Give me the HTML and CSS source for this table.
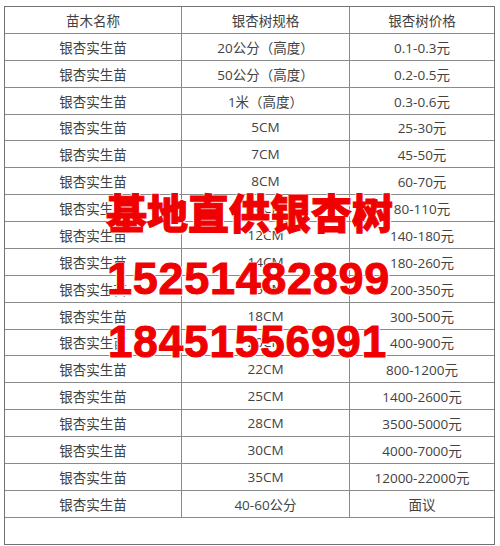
FILE: index.html
```html
<!DOCTYPE html>
<html lang="zh-CN">
<head>
<meta charset="utf-8">
<title>银杏树价格表</title>
<link rel="stylesheet" href="styles.css">
</head>
<body>
<div class="page">
  <div class="table">
    <div class="cell">苗木名称</div><div class="cell">银杏树规格</div><div class="cell">银杏树价格</div>
    <div class="cell">银杏实生苗</div><div class="cell">20公分（高度）</div><div class="cell">0.1-0.3元</div>
    <div class="cell">银杏实生苗</div><div class="cell">50公分（高度）</div><div class="cell">0.2-0.5元</div>
    <div class="cell">银杏实生苗</div><div class="cell">1米（高度）</div><div class="cell">0.3-0.6元</div>
    <div class="cell">银杏实生苗</div><div class="cell">5CM</div><div class="cell">25-30元</div>
    <div class="cell">银杏实生苗</div><div class="cell">7CM</div><div class="cell">45-50元</div>
    <div class="cell">银杏实生苗</div><div class="cell">8CM</div><div class="cell">60-70元</div>
    <div class="cell">银杏实生苗</div><div class="cell">10CM</div><div class="cell">80-110元</div>
    <div class="cell">银杏实生苗</div><div class="cell">12CM</div><div class="cell">140-180元</div>
    <div class="cell">银杏实生苗</div><div class="cell">14CM</div><div class="cell">180-260元</div>
    <div class="cell">银杏实生苗</div><div class="cell">15CM</div><div class="cell">200-350元</div>
    <div class="cell">银杏实生苗</div><div class="cell">18CM</div><div class="cell">300-500元</div>
    <div class="cell">银杏实生苗</div><div class="cell">20CM</div><div class="cell">400-900元</div>
    <div class="cell">银杏实生苗</div><div class="cell">22CM</div><div class="cell">800-1200元</div>
    <div class="cell">银杏实生苗</div><div class="cell">25CM</div><div class="cell">1400-2600元</div>
    <div class="cell">银杏实生苗</div><div class="cell">28CM</div><div class="cell">3500-5000元</div>
    <div class="cell">银杏实生苗</div><div class="cell">30CM</div><div class="cell">4000-7000元</div>
    <div class="cell">银杏实生苗</div><div class="cell">35CM</div><div class="cell">12000-22000元</div>
    <div class="cell">银杏实生苗</div><div class="cell">40-60公分</div><div class="cell">面议</div>
    <div class="cell cell-wide"></div>
  </div>
  <div class="overlay">
    <div class="ad ad-title">基地直供银杏树</div>
    <div class="ad ad-phone1">15251482899</div>
    <div class="ad ad-phone2">18451556991</div>
  </div>
</div>
</body>
</html>
```

FILE: styles.css
```css
html, body {
  margin: 0;
  padding: 0;
  background: #ffffff;
}

.page {
  position: relative;
  width: 500px;
  height: 546px;
  padding: 6px 0 0 4px;
  box-sizing: border-box;
}

.table {
  display: grid;
  grid-template-columns: 176px 167px 144px;
  grid-auto-rows: 25.88px;
  gap: 1px;
  width: max-content;
  background: #8a8a8a;
  border: 1px solid #737373;
  font-family: "Open Sans", "Noto Sans CJK SC", sans-serif;
  font-size: 13.5px;
  color: #424242;
}

.cell {
  background: #ffffff;
  display: flex;
  align-items: center;
  justify-content: center;
  white-space: nowrap;
}

.cell-wide {
  grid-column: 1 / -1;
}

.overlay {
  position: absolute;
  left: 0;
  top: 0;
}

.ad {
  position: absolute;
  color: #f00000;
  font-weight: 700;
  line-height: 1;
  white-space: nowrap;
  -webkit-text-stroke: 1px #f00000;
  text-shadow: 1.5px 0 0 #fff, -1.5px 0 0 #fff, 0 1.5px 0 #fff, 0 -1.5px 0 #fff;
}

.ad-title {
  left: 106px;
  top: 191px;
  font-family: "Noto Sans CJK SC", sans-serif;
  font-weight: 900;
  font-size: 41px;
}

.ad-phone1 {
  left: 107px;
  top: 256px;
  font-family: "Liberation Sans", Arial, sans-serif;
  font-size: 45px;
  letter-spacing: 0.7px;
}

.ad-phone2 {
  left: 108px;
  top: 320px;
  font-family: "Liberation Sans", Arial, sans-serif;
  font-size: 44px;
  letter-spacing: 0.9px;
}
```
